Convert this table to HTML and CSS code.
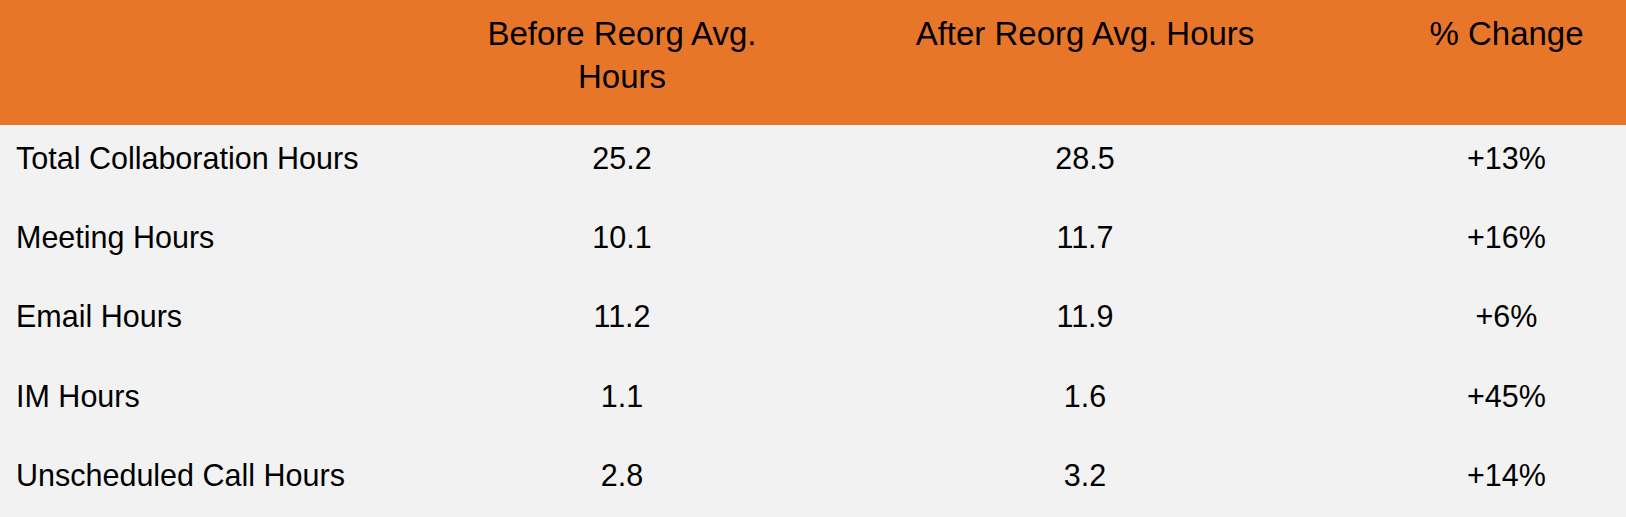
FILE: index.html
```html
<!DOCTYPE html>
<html>
<head>
<meta charset="utf-8">
<link rel="stylesheet" href="styles.css">
</head>
<body>
<div class="table">
  <div class="row head">
    <div class="cell"></div>
    <div class="cell c">Before Reorg Avg. Hours</div>
    <div class="cell c">After Reorg Avg. Hours</div>
    <div class="cell c">% Change</div>
  </div>
  <div class="row body">
    <div class="cell label">Total Collaboration Hours</div>
    <div class="cell c">25.2</div>
    <div class="cell c">28.5</div>
    <div class="cell c">+13%</div>
  </div>
  <div class="row body">
    <div class="cell label">Meeting Hours</div>
    <div class="cell c">10.1</div>
    <div class="cell c">11.7</div>
    <div class="cell c">+16%</div>
  </div>
  <div class="row body">
    <div class="cell label">Email Hours</div>
    <div class="cell c">11.2</div>
    <div class="cell c">11.9</div>
    <div class="cell c">+6%</div>
  </div>
  <div class="row body">
    <div class="cell label">IM Hours</div>
    <div class="cell c">1.1</div>
    <div class="cell c">1.6</div>
    <div class="cell c">+45%</div>
  </div>
  <div class="row body">
    <div class="cell label">Unscheduled Call Hours</div>
    <div class="cell c">2.8</div>
    <div class="cell c">3.2</div>
    <div class="cell c">+14%</div>
  </div>
</div>
</body>
</html>
```

FILE: styles.css
```css
html, body {
  margin: 0;
  padding: 0;
  background: #f2f2f2;
}
body {
  font-family: "Liberation Sans", Arial, sans-serif;
  color: #000;
  overflow: hidden;
}
.table {
  width: 1626px;
}
.row {
  display: grid;
  grid-template-columns: 461px 322px 604px 239px;
}
.head {
  background: #e87629;
  height: 125px;
  box-sizing: border-box;
  padding-top: 12px;
  font-size: 33px;
  line-height: 43.3px;
}
.body {
  height: 79.35px;
  box-sizing: border-box;
  padding-top: 15.5px;
  font-size: 30.5px;
  line-height: 34px;
}
.cell {
  padding: 0 8px;
}
.c {
  text-align: center;
}
.label {
  padding-left: 16px;
}
```
